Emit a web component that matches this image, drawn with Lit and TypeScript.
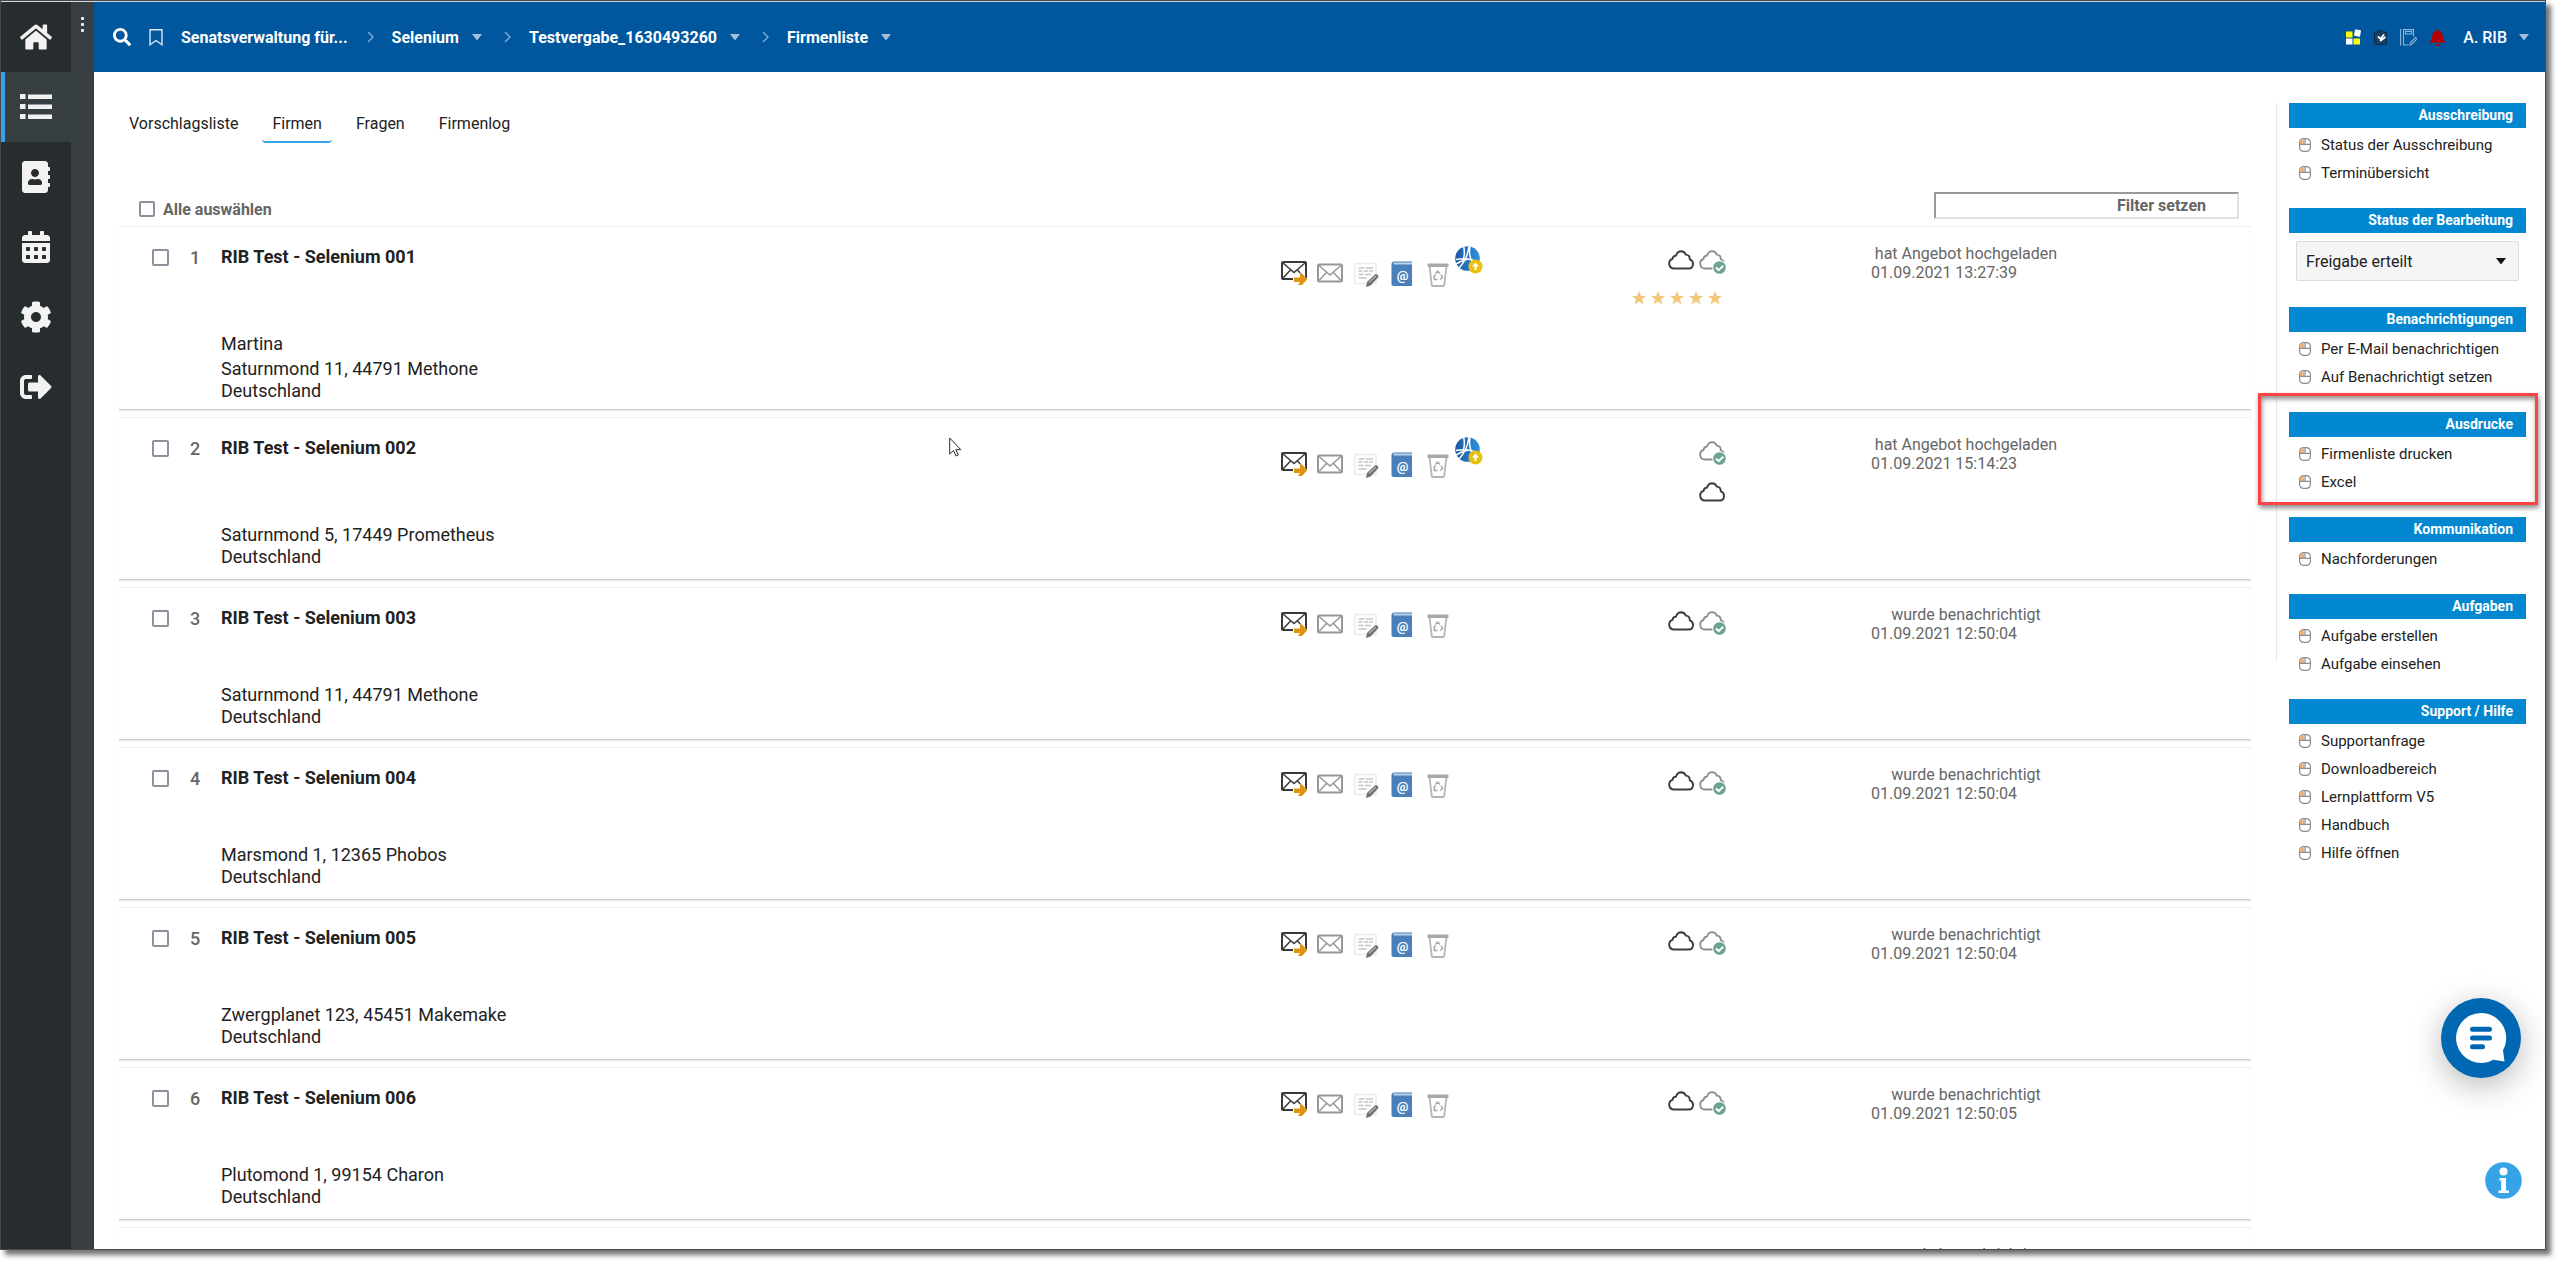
import { LitElement, html, css, svg, nothing, TemplateResult } from "lit";
import { customElement } from "lit/decorators.js";
import { classMap } from "lit/directives/class-map.js";

/* ---------- icons ---------- */

const solid = (box: string, d: string, cls: string) =>
  html`<svg class=${cls} viewBox=${box} aria-hidden="true"><path fill="currentColor" fill-rule="evenodd" d=${d}></path></svg>`;

const HOME =
  "M280.37 148.26L96 300.11V464a16 16 0 0 0 16 16l112.06-.29a16 16 0 0 0 15.92-16V368a16 16 0 0 1 16-16h64a16 16 0 0 1 16 16v95.64a16 16 0 0 0 16 16.05L464 480a16 16 0 0 0 16-16V300L295.67 148.26a12.19 12.19 0 0 0-15.3 0zM571.6 251.47L488 182.56V44.05a12 12 0 0 0-12-12h-56a12 12 0 0 0-12 12v72.61L318.47 43a48 48 0 0 0-61 0L4.34 251.47a12 12 0 0 0-1.6 16.9l25.5 31A12 12 0 0 0 45.15 301l235.22-193.74a12.19 12.19 0 0 1 15.3 0L530.9 301a12 12 0 0 0 16.9-1.6l25.5-31a12 12 0 0 0-1.7-16.93z";
const LIST =
  "M8 48h80v80H8a8 8 0 0 1-8-8V56a8 8 0 0 1 8-8zM8 208h80v80H8a8 8 0 0 1-8-8v-64a8 8 0 0 1 8-8zM8 368h80v80H8a8 8 0 0 1-8-8v-64a8 8 0 0 1 8-8zM128 56h384v72H128zM128 216h384v72H128zM128 376h384v72H128z";
const BOOK =
  "M436 160c6.6 0 12-5.4 12-12v-40c0-6.6-5.4-12-12-12h-20V48c0-26.5-21.5-48-48-48H48C21.5 0 0 21.5 0 48v416c0 26.5 21.5 48 48 48h320c26.5 0 48-21.5 48-48v-48h20c6.6 0 12-5.4 12-12v-40c0-6.6-5.4-12-12-12h-20v-64h20c6.6 0 12-5.4 12-12v-40c0-6.6-5.4-12-12-12h-20v-64h20zm-228-32c35.3 0 64 28.7 64 64s-28.7 64-64 64-64-28.7-64-64 28.7-64 64-64zm112 236.8c0 10.6-10 19.2-22.4 19.2H118.4C106 384 96 375.4 96 364.8v-19.2c0-31.8 30.1-57.6 67.2-57.6h5c12.3 5.1 25.7 8 39.8 8s27.6-2.9 39.8-8h5c37.1 0 67.2 25.8 67.2 57.6v19.2z";
const CALENDAR =
  "M0 464c0 26.500 21.500 48 48 48h352c26.500 0 48-21.500 48-48V192H0v272z" +
  [64, 192, 320]
    .map((x) =>
      [256, 384]
        .map((y) => `M${x + 12} ${y}h40a12 12 0 0 1 12 12v40a12 12 0 0 1-12 12h-40a12 12 0 0 1-12-12v-40a12 12 0 0 1 12-12z`)
        .join("")
    )
    .join("") +
  "M400 64h-48V16c0-8.800-7.200-16-16-16h-32c-8.800 0-16 7.200-16 16v48H160V16c0-8.800-7.200-16-16-16h-32c-8.800 0-16 7.200-16 16v48H48C21.500 64 0 85.500 0 112v48h448v-48c0-26.500-21.500-48-48-48z";
const COG =
  "M487.4 315.7l-42.6-24.6c4.3-23.2 4.3-47 0-70.2l42.6-24.6c4.9-2.8 7.1-8.6 5.5-14-11.1-35.6-30-67.8-54.7-94.6-3.8-4.1-10-5.1-14.8-2.3L380.8 110c-17.900-15.400-38.500-27.300-60.800-35.100V25.800c0-5.600-3.900-10.500-9.400-11.700-36.700-8.200-74.300-7.800-109.200 0-5.500 1.200-9.400 6.100-9.400 11.700V75c-22.200 7.900-42.800 19.800-60.800 35.100L88.700 85.500c-4.900-2.800-11-1.900-14.800 2.300-24.700 26.700-43.600 58.900-54.700 94.600-1.700 5.400.6 11.200 5.500 14L67.300 221c-4.300 23.200-4.300 47 0 70.200l-42.600 24.600c-4.900 2.800-7.100 8.600-5.500 14 11.100 35.600 30 67.800 54.700 94.600 3.800 4.100 10 5.100 14.800 2.300l42.600-24.600c17.900 15.400 38.500 27.300 60.800 35.100v49.200c0 5.600 3.900 10.500 9.400 11.700 36.700 8.200 74.300 7.800 109.200 0 5.500-1.200 9.400-6.100 9.400-11.700v-49.200c22.200-7.900 42.800-19.800 60.800-35.100l42.600 24.600c4.900 2.800 11 1.900 14.800-2.300 24.700-26.700 43.600-58.900 54.700-94.600 1.500-5.500-.7-11.300-5.600-14.100zM256 336c-44.100 0-80-35.900-80-80s35.900-80 80-80 80 35.900 80 80-35.900 80-80 80z";
const SIGN_OUT =
  "M497 273L329 441c-15 15-41 4.500-41-17v-96H152c-13.300 0-24-10.700-24-24v-96c0-13.300 10.700-24 24-24h136V88c0-21.400 25.900-32 41-17l168 168c9.300 9.400 9.300 24.600 0 34zM192 436v-40c0-6.600-5.400-12-12-12H96c-17.700 0-32-14.300-32-32V160c0-17.700 14.300-32 32-32h84c6.600 0 12-5.400 12-12V76c0-6.600-5.400-12-12-12H96c-53 0-96 43-96 96v192c0 53 43 96 96 96h84c6.600 0 12-5.400 12-12z";
const SEARCH =
  "M505 442.7L405.3 343c-4.5-4.5-10.6-7-17-7H372c27.6-35.3 44-79.7 44-128C416 93.1 322.9 0 208 0S0 93.1 0 208s93.1 208 208 208c48.3 0 92.7-16.4 128-44v16.3c0 6.4 2.5 12.500 7 17l99.7 99.7c9.4 9.4 24.6 9.4 33.9 0l28.3-28.3c9.4-9.4 9.4-24.6.1-34zM208 336c-70.7 0-128-57.2-128-128 0-70.7 57.2-128 128-128 70.700 0 128 57.200 128 128 0 70.700-57.200 128-128 128z";
const BELL =
  "M224 512c35.320 0 63.970-28.650 63.970-64H160.030c0 35.350 28.650 64 63.970 64zm215.390-149.710c-19.320-20.760-55.470-51.990-55.470-154.290 0-77.700-54.480-139.900-127.940-155.160V32c0-17.670-14.320-32-31.980-32s-31.980 14.330-31.980 32v20.840C118.560 68.100 64.080 130.300 64.080 208c0 102.300-36.150 133.530-55.470 154.290-6 6.450-8.660 14.160-8.610 21.710.11 16.400 12.980 32 32.100 32h383.800c19.120 0 32-15.600 32.100-32 .05-7.550-2.610-15.270-8.610-21.710z";

const chevron = html`<svg class="chevron" viewBox="0 0 7 12" aria-hidden="true"><path d="M1 1l5 5-5 5" fill="none" stroke="currentColor" stroke-width="1.500"></path></svg>`;
const caret = html`<svg class="caret" viewBox="0 0 10 6" aria-hidden="true"><path d="M0 0h10L5.800 5.500a1 1 0 0 1-1.600 0z" fill="currentColor"></path></svg>`;

const mouseIcon = html`<svg class="mouse" viewBox="0 0 12 14" aria-hidden="true">
  <rect x=".6" y=".6" width="10.800" height="12.800" rx="4" fill="#fff" stroke="#8d8d8d" stroke-width="1.200"></rect>
  <path d="M1.200 6V3.500Q1.500 1.300 4 1.200H5V6z" fill="#f7b273"></path>
  <path d="M.6 6.300h10.800M6 .6v5.700" stroke="#8d8d8d" stroke-width="1.200" fill="none"></path>
</svg>`;

const envelope = (color: string) => svg`
  <rect x="1" y="1" width="24" height="17" rx="1" fill="#fff" stroke=${color} stroke-width="2"></rect>
  <path d="M2 2l11 9.500L24 2M2 17l7.500-8M24 17l-7.500-8" fill="none" stroke=${color} stroke-width="1.500"></path>`;

const mailSend = html`<svg class="ico" viewBox="0 0 26 26" aria-hidden="true">
  ${envelope("#3b3b3b")}
  <path d="M12 15.500h7.500v-4.500l6.500 7-6.500 7v-4h-7.500z" fill="#fff"></path>
  <path d="M13 16.500h6V12.500h2l5 6-5 5.500h-4l2-3h-6z" fill="#e0930f"></path>
</svg>`;
const mail = html`<svg class="ico" viewBox="0 0 26 26" aria-hidden="true"><g transform="translate(0 2.500)">${envelope("#979797")}</g></svg>`;
const note = html`<svg class="ico" viewBox="0 0 26 26" aria-hidden="true">
  <rect x="2" y="2.500" width="21" height="20" fill="#fff" stroke="#ececec" stroke-width="1.500"></rect>
  <path d="M5.500 7h6M13 7h7M5.500 10h4M11 10h4M16 10h4M5.500 13.500h5M12 13.500h6M5.500 17h8" stroke="#c4c4c4" stroke-width="1.500" fill="none"></path>
  <path d="M13 26l1-5 8.500-8q2.500 0 3 3L17.500 24.500z" fill="#6e6e6e"></path>
  <path d="M16 21.500l7-6.500" stroke="#b5b5b5" stroke-width="1.200"></path>
</svg>`;
const contactBook = html`<svg class="ico" viewBox="0 0 26 26" aria-hidden="true">
  <path d="M2.500 3.500q0-3 3-3H23V25H4.500q-2 0-2-2z" fill="#4a80b9"></path>
  <path d="M5 1.600H23v2H5q-1.500-1 0-2z" fill="#bcd3ea"></path>
  <text x="13.500" y="18.500" text-anchor="middle" font-family="Roboto, sans-serif" font-size="13" font-weight="700" fill="#fff">@</text>
</svg>`;
const bin = html`<svg class="ico" viewBox="0 0 26 26" aria-hidden="true">
  <path d="M4.500 5l2.300 19.200q.1.800 1 .8h10.400q.9 0 1-.8L21.500 5" fill="#fff" stroke="#b5b5b5" stroke-width="1.800"></path>
  <rect x="2.500" y="2.500" width="21" height="3.500" rx="1" fill="#a9a9a9"></rect>
  <path d="M10.500 12.500l2-2.500 2.500 2.500M16 13.500l1.500 3-2.500 2M12.500 18.500H9.500L9 15.500l1.500-2" fill="none" stroke="#a9a9a9" stroke-width="1.500"></path>
</svg>`;
const globe = html`<svg class="globe" viewBox="0 0 28 28" aria-hidden="true">
  <defs><linearGradient id="g" x1="0" y1="0" x2="1" y2="0"><stop offset="0" stop-color="#1d57a5"></stop><stop offset="1" stop-color="#2f92dc"></stop></linearGradient></defs>
  <circle cx="12.500" cy="12.500" r="12.300" fill="url(#g)"></circle>
  <path d="M8.500 0q2 7-.5 14.500M14 0q-1.500 13-10 22M1 13.500q12-2.500 23.500 3M15 .5q-1.500 9 2 15M1 18q5-3 12-5" stroke="#fff" stroke-width="1.500" fill="none"></path>
  <circle cx="20.500" cy="20.500" r="7" fill="#e9c010"></circle>
  <path d="M19.500 24v-3.500H17l3.500-4 3.500 4h-2.500V24z" fill="#fff"></path>
</svg>`;

const cloudShape = "M6 18.500a5 5 0 0 1-1.500-9.700q.5-3 3.500-3.300Q9.500 1.200 13 1.200q3.500.2 4.800 3.400 4 .2 4 4.700 3.500 1.200 3.200 5-.5 4-4 4.200z";
const cloud = html`<svg class="cloud" viewBox="0 0 27 24" role="img" aria-label="Angebot"><path d=${cloudShape} fill="#fff" stroke="#3d3d3d" stroke-width="1.900"></path></svg>`;
const cloudOk = html`<svg class="cloud" viewBox="0 0 27 24" role="img" aria-label="Angebot geprüft">
  <path d=${cloudShape} fill="#fff" stroke="#8d8d8d" stroke-width="1.800"></path>
  <circle cx="20.500" cy="17.500" r="7.300" fill="#fff"></circle>
  <circle cx="20.500" cy="17.500" r="6.300" fill="#6ca58f"></circle>
  <path d="M17 17.500l2.700 2.700 4.500-4.500" fill="none" stroke="#fff" stroke-width="2"></path>
</svg>`;
const star = html`<svg class="star" viewBox="0 0 14 14" aria-hidden="true"><path d="M7 0l2 5h5l-4 3.200L11.600 13.500 7 10.400 2.400 13.500 4 8.200 0 5h5z" fill="#f1c87c"></path></svg>`;

/* ---------- data ---------- */

interface Company {
  no: number;
  contact?: string;
  street: string;
  status: string;
  date: string;
  offer?: "rated" | "stacked";
}

const told = "wurde benachrichtigt";
const uploaded = "hat Angebot hochgeladen";
const companies: Company[] = [
  { no: 1, contact: "Martina", street: "Saturnmond 11, 44791 Methone", status: uploaded, date: "01.09.2021 13:27:39", offer: "rated" },
  { no: 2, street: "Saturnmond 5, 17449 Prometheus", status: uploaded, date: "01.09.2021 15:14:23", offer: "stacked" },
  { no: 3, street: "Saturnmond 11, 44791 Methone", status: told, date: "01.09.2021 12:50:04" },
  { no: 4, street: "Marsmond 1, 12365 Phobos", status: told, date: "01.09.2021 12:50:04" },
  { no: 5, street: "Zwergplanet 123, 45451 Makemake", status: told, date: "01.09.2021 12:50:04" },
  { no: 6, street: "Plutomond 1, 99154 Charon", status: told, date: "01.09.2021 12:50:05" },
  { no: 7, street: "", status: told, date: "01.09.2021 12:50:05" },
];

const sections: { title: string; items?: string[]; marked?: boolean }[] = [
  { title: "Ausschreibung", items: ["Status der Ausschreibung", "Terminübersicht"] },
  { title: "Status der Bearbeitung" },
  { title: "Benachrichtigungen", items: ["Per E-Mail benachrichtigen", "Auf Benachrichtigt setzen"] },
  { title: "Ausdrucke", items: ["Firmenliste drucken", "Excel"], marked: true },
  { title: "Kommunikation", items: ["Nachforderungen"] },
  { title: "Aufgaben", items: ["Aufgabe erstellen", "Aufgabe einsehen"] },
  { title: "Support / Hilfe", items: ["Supportanfrage", "Downloadbereich", "Lernplattform V5", "Handbuch", "Hilfe öffnen"] },
];

const base = css`
  * { box-sizing: border-box; }
  button { font: inherit; color: inherit; background: none; border: 0; padding: 0; cursor: pointer; }
  a { color: inherit; text-decoration: none; }
  svg { display: block; flex: none; }
  ul, ol { list-style: none; margin: 0; padding: 0; }
  input[type="checkbox"] {
    appearance: none; width: 17px; height: 17px; margin: 0; flex: none;
    border: 2px solid #8f8f9d; border-radius: 2px; background: #fff;
  }
`;

/* ---------- navigation rail ---------- */

@customElement("nav-rail")
class NavRail extends LitElement {
  static styles = [base, css`
    :host { display: flex; background: #373f43; color: #f2f2f2; }
    .rail { width: 70px; background: #272c2f; }
    .item { display: flex; align-items: center; justify-content: center; height: 70px; }
    .item.active { background: #373f43; box-shadow: inset 4px 0 #36a3e6; }
    .glyph { height: 32px; width: 32px; }
    .handle { width: 23px; display: flex; flex-direction: column; align-items: center; }
    .more { display: flex; flex-direction: column; gap: 3px; padding: 15px 8px; }
    .dot { width: 3px; height: 3px; border-radius: 1px; background: #f2f2f2; }
  `];

  render() {
    const entries: [string, string, string][] = [
      ["Startseite", "0 0 576 512", HOME],
      ["Vergaben", "0 0 512 512", LIST],
      ["Adressbuch", "0 0 448 512", BOOK],
      ["Kalender", "0 0 448 512", CALENDAR],
      ["Einstellungen", "0 0 512 512", COG],
      ["Abmelden", "0 0 512 512", SIGN_OUT],
    ];
    return html`
      <nav class="rail" aria-label="Hauptnavigation">
        ${entries.map(([label, box, d], i) => html`
          <a class=${classMap({ item: true, active: i === 1 })} href="#" aria-label=${label}>${solid(box, d, "glyph")}</a>`)}
      </nav>
      <div class="handle">
        <button class="more" aria-label="Menü"><span class="dot"></span><span class="dot"></span><span class="dot"></span></button>
      </div>`;
  }
}

/* ---------- top bar ---------- */

@customElement("top-bar")
class TopBar extends LitElement {
  static styles = [base, css`
    :host {
      display: flex; align-items: center; justify-content: space-between;
      height: 70px; padding: 0 16px 0 19px; background: #00579d; color: #fff;
      font-size: 16px; font-weight: 700;
    }
    .path, .tools, .crumb { display: flex; align-items: center; }
    .search { width: 18px; height: 18px; }
    .bookmark { width: 14px; height: 17px; margin: 0 18px; }
    .chevron { width: 7px; height: 12px; margin: 0 18px 0 22px; color: #7fa9cd; }
    .caret { width: 10px; height: 6px; color: #a5bfd9; }
    .crumb { gap: 13px; }
    .crumb.plain + .chevron { margin-left: 19px; }
    .tools { gap: 13px; }
    .tiles { width: 15px; height: 16px; }
    .clip { width: 13px; height: 16px; }
    .journal { width: 17px; height: 17px; }
    .bell { width: 15px; height: 17px; color: #b40000; }
    .user { display: flex; align-items: center; gap: 12px; margin-left: 5px; font-weight: 500; }
  `];

  render() {
    return html`
      <nav class="path" aria-label="Pfad">
        <button aria-label="Suche">${solid("0 0 512 512", SEARCH, "search")}</button>
        <button aria-label="Lesezeichen"><svg class="bookmark" viewBox="0 0 14 17"><path d="M1 .7h12v15L7 11.500l-6 4.200z" fill="none" stroke="#dce8f3" stroke-width="1.400"></path></svg></button>
        <a class="crumb plain" href="#">Senatsverwaltung für...</a>
        ${chevron}
        <button class="crumb">Selenium ${caret}</button>
        ${chevron}
        <button class="crumb">Testvergabe_1630493260 ${caret}</button>
        ${chevron}
        <button class="crumb">Firmenliste ${caret}</button>
      </nav>
      <div class="tools">
        <button aria-label="Kacheln"><svg class="tiles" viewBox="0 0 15 16">
          <rect x="0" y="2.500" width="6.500" height="6" fill="#ff0"></rect><rect x="7.500" y="9.500" width="6.500" height="6" fill="#ff0"></rect>
          <rect x="0" y="9.500" width="6.500" height="6" fill="#fff"></rect><path d="M9.500.8l5 1-1 5.500-5-1z" fill="#fff" stroke="#fff"></path></svg></button>
        <button aria-label="Aufgaben"><svg class="clip" viewBox="0 0 13 16">
          <path d="M1 3h3l2.500-2.500L9 3h2.500q1 0 1 1v10.500q0 1-1 1H1.500q-1 0-1-1V4z" fill="#174064" stroke="#0c2d4a"></path>
          <path d="M4 7.500l2.500 2.500 3.500-4.500M6 12l5.500-4" fill="none" stroke="#fff" stroke-width="1.800"></path></svg></button>
        <button aria-label="Protokoll"><svg class="journal" viewBox="0 0 17 17">
          <path d="M.6 0v16.500M3.500 16.500V.6h10v7M3.500 16h5M5.500 2.500v2.500h6V2.500zM10 16l.500-2.500 5-5 1.500 1.500-5 5z" fill="none" stroke="#8fb4d6" stroke-width="1.100"></path>
          </svg></button>
        <button aria-label="Meldungen">${solid("0 0 448 512", BELL, "bell")}</button>
        <button class="user">A. RIB ${caret}</button>
      </div>`;
  }
}

/* ---------- company list ---------- */

@customElement("company-list")
class CompanyList extends LitElement {
  static styles = [base, css`
    :host { display: block; color: #222; }
    .tabs { display: flex; gap: 14px; font-size: 16px; }
    .tab { padding: 2px 10px 0; line-height: 38px; border-bottom: 2px solid transparent; border-radius: 4px; height: 40px; }
    .tab.active { border-bottom-color: #36a3e6; }
    .toolbar { display: flex; align-items: center; justify-content: space-between; height: 34px; margin-top: 49px; padding: 0 12px 0 20px; }
    .all { display: flex; align-items: center; gap: 8px; font-size: 16px; font-weight: 700; color: #666; }
    .all input { width: 16px; height: 16px; }
    .filter {
      align-self: flex-start; width: 305px; height: 27px; padding: 0 31px 0 8px;
      border: 2px solid; border-color: #999 #e3e3e3 #e3e3e3 #999; background: #fff;
      font: 700 16px Roboto, sans-serif; text-align: right; color: #666;
    }
    .filter::placeholder { color: #666; opacity: 1; }
    .rows { display: flex; flex-direction: column; gap: 7px; }
    .row { border-top: 1px solid #eee; border-bottom: 1px solid #ccc; padding: 17px 0 11px; box-shadow: 0 1px 1px rgba(0, 0, 0, 0.08); }
    .row.person { padding-bottom: 7px; }
    .head { display: grid; grid-template-columns: 102px 1055fr 226fr 226fr 143fr 380fr; min-height: 79px; }
    .offer .head { min-height: 89px; }
    .pick { display: flex; align-items: center; height: 26px; padding-left: 33px; font-size: 18px; font-weight: 500; color: #666; }
    .no { margin-left: 21px; }
    .name { margin: 0; padding-top: 2px; font-size: 18px; line-height: 22px; font-weight: 700; }
    .actions { display: flex; align-items: flex-start; gap: 10px; padding: 7px 0 0 5px; }
    .offer .actions { padding-top: 17px; }
    .ico { width: 26px; height: 26px; }
    .globe { width: 28px; height: 28px; margin-top: -15px; margin-left: -6px; }
    .marks { display: flex; flex-wrap: wrap; justify-content: flex-end; align-content: flex-start; gap: 17px 4px; padding: 6px 2px 0 0; }
    .stacked .marks { flex-direction: column-reverse; flex-wrap: nowrap; justify-content: flex-end; align-items: flex-end; }
    .cloud { width: 27px; height: 24px; }
    .stars { flex-basis: 100%; display: flex; justify-content: flex-end; gap: 5px; padding-right: 4px; }
    .star { width: 14px; height: 14px; }
    .state { grid-column: 6; width: 190px; font-size: 16px; line-height: 19px; color: #666; }
    .verb { display: block; text-align: center; }
    .details { padding-left: 102px; font-size: 18px; line-height: 22px; min-height: 44px; }
    .contact { padding-bottom: 3px; }
    .contact, .street, .land { margin: 0; }
  `];

  private row(c: Company): TemplateResult {
    const name = `RIB Test - Selenium 00${c.no}`;
    return html`
      <li class=${classMap({ row: true, person: !!c.contact, offer: !!c.offer, stacked: c.offer === "stacked" })}>
        <div class="head">
          <div class="pick"><input type="checkbox" aria-label=${name} /><span class="no">${c.no}</span></div>
          <h2 class="name">${name}</h2>
          <div class="actions">
            <button aria-label="Nachricht senden">${mailSend}</button>
            <button aria-label="Nachrichten">${mail}</button>
            <button aria-label="Notiz">${note}</button>
            <button aria-label="Kontakt">${contactBook}</button>
            <button aria-label="Entfernen">${bin}</button>
            ${c.offer ? html`<button aria-label="Angebot">${globe}</button>` : nothing}
          </div>
          <div class="marks">
            ${cloud}${cloudOk}
            ${c.offer === "rated" ? html`<span class="stars" role="img" aria-label="5 Sterne">${[1, 2, 3, 4, 5].map(() => star)}</span>` : nothing}
          </div>
          <div class="state"><span class="verb">${c.status}</span>${c.date}</div>
        </div>
        <div class="details">
          ${c.contact ? html`<p class="contact">${c.contact}</p>` : nothing}
          ${c.street ? html`<p class="street">${c.street}</p><p class="land">Deutschland</p>` : nothing}
        </div>
      </li>`;
  }

  render() {
    return html`
      <nav class="tabs" aria-label="Ansicht">
        ${["Vorschlagsliste", "Firmen", "Fragen", "Firmenlog"].map((t) => html`<a class=${classMap({ tab: true, active: t === "Firmen" })} href="#">${t}</a>`)}
      </nav>
      <div class="toolbar">
        <label class="all"><input type="checkbox" />Alle auswählen</label>
        <input class="filter" type="text" aria-label="Filter setzen" placeholder="Filter setzen" />
      </div>
      <ol class="rows">${companies.map((c) => this.row(c))}</ol>`;
  }
}

/* ---------- action panel ---------- */

@customElement("action-panel")
class ActionPanel extends LitElement {
  static styles = [base, css`
    :host { display: flex; gap: 12px; color: #222; }
    .rule { width: 1px; height: 558px; background: #e8e8e8; flex: none; }
    .stack { flex: 1; display: flex; flex-direction: column; gap: 21px; }
    .section { position: relative; }
    .title {
      margin: 0 0 3px; height: 25px; padding-right: 13px; background: #0288d1; color: #fff;
      font-size: 14px; line-height: 24px; font-weight: 700; text-align: right;
    }
    .link { display: flex; align-items: center; gap: 10px; height: 28px; padding-left: 10px; font-size: 15px; }
    .mouse { width: 12px; height: 14px; }
    .choice { display: flex; align-items: center; margin: 8px 7px 5px; background: #f5f5f5; border: 1px solid #dcdcdc; border-radius: 2px; }
    .select {
      appearance: none; flex: 1; height: 38px; padding: 0 9px; margin-right: -22px; border: 0; background: transparent;
      font: 16px Roboto, sans-serif; color: #222;
    }
    .caret { width: 10px; height: 6px; margin-right: 12px; color: #111; pointer-events: none; }
    .marker {
      position: absolute; inset: -19px -12px auto -31px; height: 112px; border: 3px solid #fc4444; pointer-events: none;
      box-shadow: 1px 3px 5px rgba(0, 0, 0, 0.45), inset 1px 3px 5px rgba(0, 0, 0, 0.45);
    }
  `];

  render() {
    return html`
      <div class="rule"></div>
      <div class="stack">
        ${sections.map((s) => html`
          <section class="section">
            <h2 class="title">${s.title}</h2>
            ${s.items
              ? html`<ul>${s.items.map((i) => html`<li><a class="link" href="#">${mouseIcon}${i}</a></li>`)}</ul>`
              : html`<div class="choice"><select class="select" aria-label=${s.title}><option>Freigabe erteilt</option></select>${caret}</div>`}
            ${s.marked ? html`<div class="marker"></div>` : nothing}
          </section>`)}
      </div>`;
  }
}

/* ---------- page ---------- */

@customElement("app-root")
class AppRoot extends LitElement {
  static styles = [base, css`
    :host { display: block; height: 100vh; padding: 0 15px 15px 0; overflow: hidden; background: #fff; font-family: Roboto, sans-serif; box-sizing: border-box; }
    .window {
      position: relative; display: flex; height: 100%; overflow: hidden; background: #fff;
      border: 1px solid #45484c; box-shadow: 5px 5px 5px rgba(0, 0, 0, 0.55);
    }
    .frame { flex: 1; display: flex; min-width: 0; border-top: 1px solid #d5d5da; }
    .page { flex: 1; min-width: 0; }
    .body { display: flex; gap: 25px; padding: 31px 19px 0 25px; }
    .list { flex: 1; min-width: 0; }
    .panel { width: 250px; flex: none; }
    .chat, .info { position: absolute; border-radius: 50%; }
    .chat { right: 24px; bottom: 171px; width: 80px; height: 80px; background: #0067b3; box-shadow: 0 8px 32px rgba(0, 0, 0, 0.28); }
    .info { right: 23px; bottom: 50px; width: 37px; height: 37px; }
    .fill { width: 100%; height: 100%; }
    .pointer { position: absolute; left: 948px; top: 436px; width: 13px; height: 20px; pointer-events: none; }
  `];

  render() {
    return html`
      <div class="window">
        <div class="frame">
          <nav-rail></nav-rail>
          <main class="page">
            <top-bar></top-bar>
            <div class="body">
              <company-list class="list"></company-list>
              <action-panel class="panel"></action-panel>
            </div>
          </main>
        </div>
        <button class="chat" aria-label="Chat"><svg class="fill" viewBox="0 0 80 80">
          <path d="M40 15a25 25 0 1 0 12.500 46.700L63.500 63.500 62 52.200A25 25 0 0 0 40 15z" fill="#fff"></path>
          <path d="M31.500 31.200h17M31.500 40h17M31.500 48.800h10" stroke="#0067b3" stroke-width="5" stroke-linecap="round"></path></svg></button>
        <button class="info" aria-label="Information"><svg class="fill" viewBox="0 0 37 37">
          <circle cx="18.500" cy="18.500" r="18.300" fill="#36a3e6"></circle>
          <circle cx="18.500" cy="9.500" r="4" fill="#fff"></circle>
          <path d="M14.500 16h6.500v12.500h3V31H13.500v-2.500h2.700v-10h-1.700z" fill="#fff"></path></svg></button>
        <svg class="pointer" viewBox="0 0 13 20" aria-hidden="true"><path d="M.7 1v16l3.800-3.500 2.600 5.500 2.200-1-2.500-5.300h5z" fill="#fff" stroke="#2b2b3a"></path></svg>
      </div>`;
  }
}
